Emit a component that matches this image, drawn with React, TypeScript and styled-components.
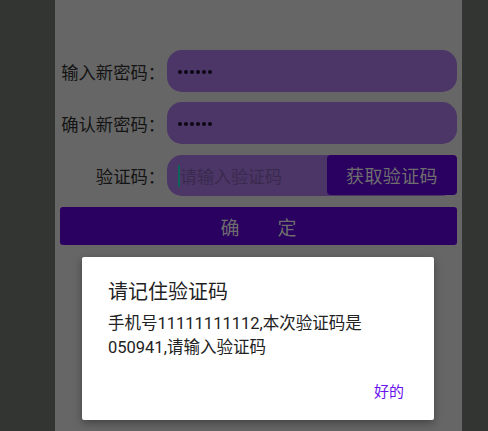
import React from "react";
import styled, { createGlobalStyle } from "styled-components";

const Global = createGlobalStyle`
  html, body { margin: 0; padding: 0; }
  body {
    background: #333533;
    font-family: Roboto, "Noto Sans CJK SC", sans-serif;
    overflow: hidden;
  }
`;

const Screen = styled.div`
  position: relative;
  width: 407px;
  height: 431px;
  margin-left: 55px;
  background: #666666;
  padding: 50px 5px 0 0;
  box-sizing: border-box;
  display: flex;
  flex-direction: column;
`;

const Row = styled.div<{ $gap: number }>`
  display: flex;
  align-items: center;
  margin-bottom: ${(p) => p.$gap}px;
`;

const Label = styled.div`
  width: 110px;
  margin-right: 2px;
  text-align: right;
  font-family: "Noto Sans CJK SC", sans-serif;
  font-size: 17.3px;
  color: #141414;
  white-space: nowrap;
`;

const Field = styled.div<{ $h: number }>`
  flex: 1;
  height: ${(p) => p.$h}px;
  background: #4c3667;
  border-radius: 15px;
  display: flex;
  align-items: center;
  padding-left: 11px;
  box-sizing: border-box;
  position: relative;
`;

const Dots = styled.div`
  display: flex;
  gap: 2px;
  margin-top: 1px;
`;

const Dot = styled.span`
  width: 4px;
  height: 4px;
  border-radius: 50%;
  background: #0d0614;
`;

const Cursor = styled.span`
  width: 2px;
  height: 22px;
  background: #10655a;
`;

const Placeholder = styled.span`
  font-family: "Noto Sans CJK SC", sans-serif;
  font-size: 17px;
  color: #3a2a4e;
`;

const CodeButton = styled.div`
  position: absolute;
  right: 0;
  top: 0;
  width: 130px;
  height: 40px;
  background: #2a0060;
  border-radius: 4px;
  display: flex;
  align-items: center;
  justify-content: center;
  font-family: "Noto Sans CJK SC", sans-serif;
  font-size: 18px;
  color: #6e6e6e;
  letter-spacing: 0.4px;
`;

const Confirm = styled.div`
  margin-left: 5px;
  height: 38px;
  background: #2a0060;
  border-radius: 3px;
  display: flex;
  align-items: center;
  justify-content: center;
  font-family: "Noto Sans CJK SC", sans-serif;
  font-size: 19px;
  color: #6d6d6d;
  white-space: pre;
`;

const Dialog = styled.div`
  position: absolute;
  left: 27px;
  top: 257px;
  width: 352px;
  height: 163px;
  background: #ffffff;
  border-radius: 2px;
  box-shadow: 0 3px 8px rgba(0, 0, 0, 0.35);
  box-sizing: border-box;
  padding: 21px 30px 0 26px;
  display: flex;
  flex-direction: column;
`;

const Title = styled.div`
  font-family: "Noto Sans CJK SC", sans-serif;
  font-size: 20px;
  line-height: 26px;
  color: #1f1f1f;
`;

const Body = styled.div`
  margin-top: 8px;
  font-family: Roboto, "Noto Sans CJK SC", sans-serif;
  font-size: 16.5px;
  line-height: 24px;
  color: #222222;
`;

const Actions = styled.div`
  margin-top: 21px;
  display: flex;
  justify-content: flex-end;
`;

const OkButton = styled.div`
  font-family: "Noto Sans CJK SC", sans-serif;
  font-size: 15px;
  line-height: 20px;
  color: #6a12ee;
`;

const sixDots = [0, 1, 2, 3, 4, 5];

export default function App() {
  return (
    <>
      <Global />
      <Screen>
        <Row $gap={10}>
          <Label>输入新密码：</Label>
          <Field $h={42}>
            <Dots>
              {sixDots.map((i) => (
                <Dot key={i} />
              ))}
            </Dots>
          </Field>
        </Row>
        <Row $gap={11}>
          <Label>确认新密码：</Label>
          <Field $h={42}>
            <Dots>
              {sixDots.map((i) => (
                <Dot key={i} />
              ))}
            </Dots>
          </Field>
        </Row>
        <Row $gap={11}>
          <Label>验证码：</Label>
          <Field $h={41}>
            <Cursor />
            <Placeholder>请输入验证码</Placeholder>
            <CodeButton>获取验证码</CodeButton>
          </Field>
        </Row>
        <Confirm>{"确\u3000\u3000定"}</Confirm>
        <Dialog>
          <Title>请记住验证码</Title>
          <Body>
            手机号11111111112,本次验证码是
            <br />
            050941,请输入验证码
          </Body>
          <Actions>
            <OkButton>好的</OkButton>
          </Actions>
        </Dialog>
      </Screen>
    </>
  );
}
